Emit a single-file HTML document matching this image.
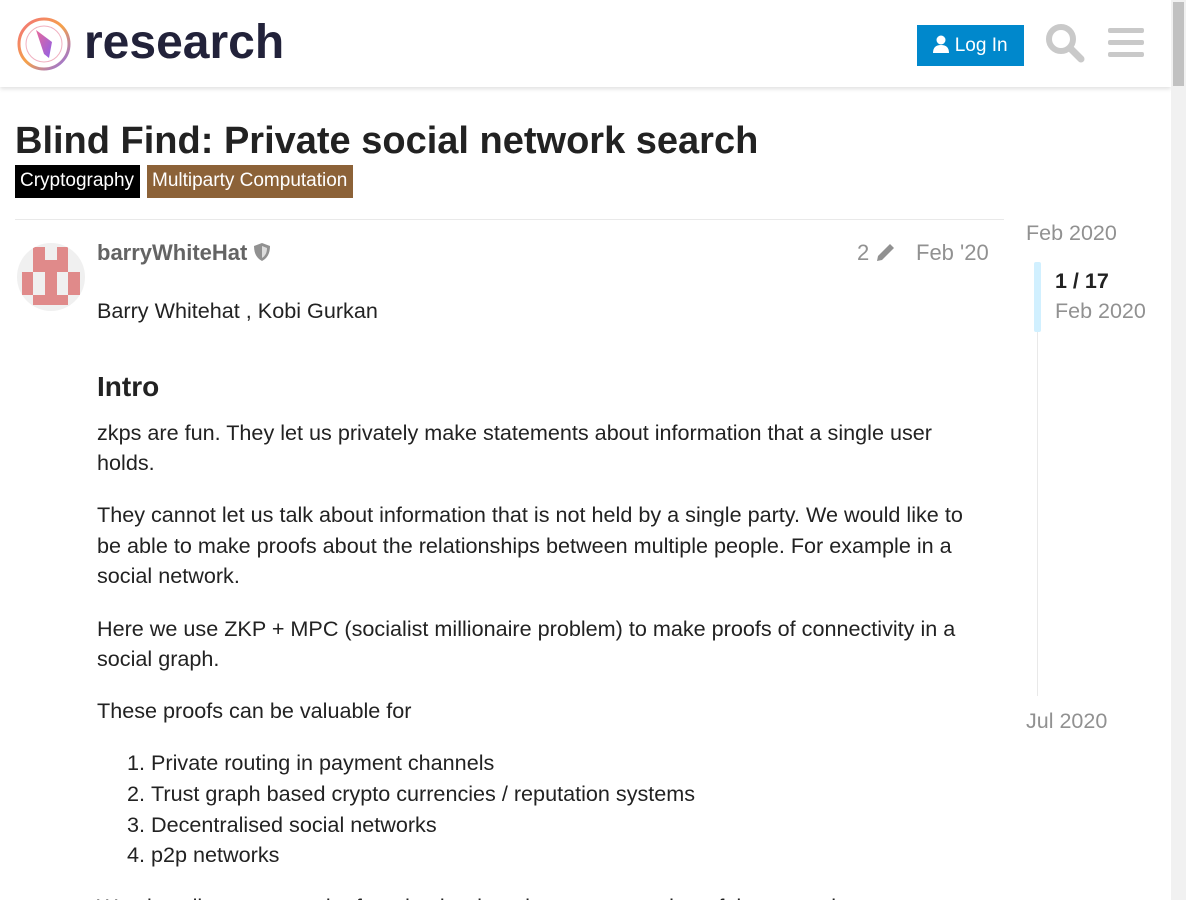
<!DOCTYPE html>
<html style="overflow:hidden;height:900px"><head><meta charset="utf-8"><style>
body{margin:0;width:1186px;height:900px;overflow:hidden;font-family:"Liberation Sans",sans-serif;color:#222;background:#fff;position:relative}
.hdr{position:absolute;left:0;top:0;width:1171px;height:87px;background:#fff;box-shadow:0 2px 4px rgba(0,0,0,.12)}
.sb{position:absolute;left:1171px;top:0;width:15px;height:900px;background:#f1f1f1}
.sb div{position:absolute;left:2px;top:2px;width:11px;height:84px;background:#c1c1c1}
.logo{position:absolute;left:84px;top:15px;font-size:48px;font-weight:bold;color:#22223a}
.btn{position:absolute;left:917px;top:25px;width:107px;height:41px;background:#0088cc;color:#fff;font-size:19px;line-height:41px;text-align:center}
h1{position:absolute;left:15px;top:120px;margin:0;font-size:38px;font-weight:bold;color:#222;white-space:nowrap}
.tag{position:absolute;top:165px;height:33px;line-height:32px;color:#fff;font-size:19px;padding:0 5px;box-sizing:border-box;white-space:nowrap}
.hr{position:absolute;left:15px;top:219px;width:989px;height:1px;background:#e9e9e9}
.av{position:absolute;left:17px;top:243px;width:68px;height:68px;border-radius:50%;background:#f0f0f0;overflow:hidden}
.av i{position:absolute;background:#e08a8a}
.name{position:absolute;left:97px;top:240px;font-size:22px;font-weight:bold;color:#646464}
.meta{position:absolute;top:240px;font-size:22px;color:#919191}
.wrap{position:absolute;left:0;top:0;width:1171px;height:900px;overflow:hidden}
.post{position:absolute;left:97px;top:296px;width:890px;font-size:21.6px;line-height:30.6px;color:#222}
.post p{margin:0 0 21.5px}
.post h2{font-size:28px;margin:43px 0 14px;line-height:34px}
.post ol{margin:0;padding-left:54px}
.tl{position:absolute;left:1026px;color:#919191;font-size:21.5px}
</style></head><body>
<div class="hdr">
<svg style="position:absolute;left:17px;top:16px" width="56" height="56" viewBox="0 0 56 56">
<defs><linearGradient id="g" x1="0" y1="0" x2="1" y2="1"><stop offset="0" stop-color="#f2717a"/><stop offset=".5" stop-color="#f5a14a"/><stop offset="1" stop-color="#8a6bf0"/></linearGradient>
<linearGradient id="g2" x1="0" y1="0" x2="1" y2="1"><stop offset="0" stop-color="#e86a9a"/><stop offset="1" stop-color="#8f5fe8"/></linearGradient></defs>
<circle cx="27" cy="28" r="25" fill="none" stroke="url(#g)" stroke-width="3"/>
<circle cx="27" cy="28" r="18" fill="none" stroke="#f0b0c0" stroke-width="1"/>
<path d="M19 14 L35 26 L32 42 L27 38 Z" fill="url(#g2)"/>
</svg>
<div class="logo">research</div>
<div class="btn"><svg width="16" height="18" viewBox="0 0 16 18" style="vertical-align:-2px"><circle cx="8" cy="5" r="4.5" fill="#fff"/><path d="M0 18 Q0 10 8 10 Q16 10 16 18Z" fill="#fff"/></svg> Log In</div>
<svg style="position:absolute;left:1045px;top:23px" width="40" height="40" viewBox="0 0 40 40"><circle cx="16" cy="16" r="12" fill="none" stroke="#c9c9c9" stroke-width="6"/><path d="M25 25 L36 36" stroke="#c9c9c9" stroke-width="7" stroke-linecap="round"/></svg>
<svg style="position:absolute;left:1108px;top:27px" width="36" height="32" viewBox="0 0 36 32"><rect y="1" width="36" height="5" rx="2" fill="#c9c9c9"/><rect y="13" width="36" height="5" rx="2" fill="#c9c9c9"/><rect y="25" width="36" height="5" rx="2" fill="#c9c9c9"/></svg>
</div>
<div class="sb"><div></div></div>
<h1>Blind Find: Private social network search</h1>
<div class="tag" style="left:15px;width:125px;background:#000">Cryptography</div>
<div class="tag" style="left:147px;width:206px;background:#8c6238">Multiparty Computation</div>
<div class="hr"></div>
<div class="av">
<i style="left:16px;top:4px;width:12px;height:13px"></i><i style="left:40px;top:4px;width:11px;height:13px"></i>
<i style="left:16px;top:17px;width:35px;height:12px"></i>
<i style="left:5px;top:29px;width:11px;height:23px"></i><i style="left:28px;top:29px;width:12px;height:23px"></i><i style="left:51px;top:29px;width:12px;height:23px"></i>
<i style="left:16px;top:52px;width:35px;height:10px"></i>
</div>
<div class="name">barryWhiteHat <svg width="18" height="20" viewBox="0 0 18 20" style="vertical-align:-2px"><path d="M9 1 L17 4 Q17 15 9 19 Q1 15 1 4Z" fill="#919191"/><path d="M9 4 L14 6 Q14 13 9 16Z" fill="#ddd"/></svg></div>
<div class="meta" style="left:857px">2 <svg width="22" height="22" viewBox="0 0 22 22" style="vertical-align:-3px"><path d="M3 15 L15 3 L19 7 L7 19 L2 20Z" fill="#919191"/></svg></div>
<div class="meta" style="left:916px">Feb '20</div>
<div class="wrap">
<div class="post">
<p>Barry Whitehat , Kobi Gurkan</p>
<h2>Intro</h2>
<p>zkps are fun. They let us privately make statements about information that a single user holds.</p>
<p>They cannot let us talk about information that is not held by a single party. We would like to be able to make proofs about the relationships between multiple people. For example in a social network.</p>
<p>Here we use ZKP + MPC (socialist millionaire problem) to make proofs of connectivity in a social graph.</p>
<p>These proofs can be valuable for</p>
<ol><li>Private routing in payment channels</li><li>Trust graph based crypto currencies / reputation systems</li><li>Decentralised social networks</li><li>p2p networks</li></ol>
<p style="margin-top:21.5px">We also allow a user to be found only when they are a member of the network.</p>
</div>
</div>
<div class="tl" style="top:221px">Feb 2020</div>
<div style="position:absolute;left:1037px;top:262px;width:1px;height:434px;background:#e9e9e9"></div>
<div style="position:absolute;left:1034px;top:262px;width:7px;height:70px;background:#d1f0ff;border-radius:2px"></div>
<div style="position:absolute;left:1055px;top:269px;font-size:21.5px;font-weight:bold;color:#222">1 / 17</div>
<div class="tl" style="left:1055px;top:299px">Feb 2020</div>
<div class="tl" style="top:709px">Jul 2020</div>
</body></html>
